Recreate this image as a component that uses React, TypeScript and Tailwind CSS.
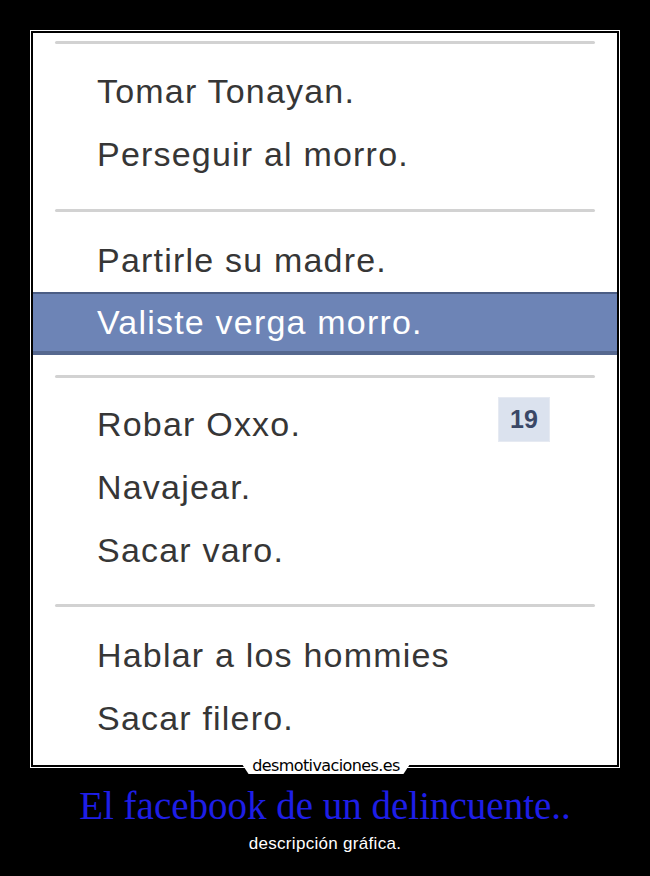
export default function App() {
  const sans = "font-['Liberation_Sans',Arial,sans-serif]"

  function separador(extra: string) {
    return <div className={"mx-[22px] h-[3px] rounded-full bg-[#d2d2d2] " + extra} />
  }

  function item(texto: string, extra = "") {
    return (
      <div className={"h-[63px] flex items-center pl-[64px] text-[34px] tracking-[1.2px] text-[#363636] " + extra}>
        {texto}
      </div>
    )
  }

  return (
    <div className={"w-[650px] h-[876px] bg-black pt-[30px] flex flex-col " + sans}>
      <div className="relative ml-[30px] w-[590px] h-[738px] border border-white p-[2px]">
        <div className="w-full h-full bg-white flex flex-col pt-[8px]">
          {separador("")}
          {item("Tomar Tonayan.", "mt-[16px]")}
          {item("Perseguir al morro.")}
          {separador("mt-[23px]")}
          {item("Partirle su madre.", "mt-[17px]")}
          <div className="h-[63px] flex items-center pl-[64px] text-[34px] tracking-[1.2px] text-white bg-[#6d84b6] border-t-2 border-t-[#4b5d84] border-b-[4px] border-b-[#56688f]">
            Valiste verga morro.
          </div>
          {separador("mt-[20px]")}
          <div className="mt-[15px] h-[63px] flex items-center justify-between pl-[64px] pr-[67px] text-[34px] tracking-[1.2px] text-[#363636]">
            <span>Robar Oxxo.</span>
            <span className="-mt-[10px] w-[52px] h-[45px] flex items-center justify-center bg-[#dbe2ee] border border-[#e6eaf2] text-[25px] font-bold tracking-normal text-[#3a4766]">
              19
            </span>
          </div>
          {item("Navajear.")}
          {item("Sacar varo.")}
          {separador("mt-[22px]")}
          {item("Hablar a los hommies", "mt-[17px]")}
          {item("Sacar filero.")}
        </div>

        <div className="absolute left-[207px] top-[727px] w-[176px] h-[16px] bg-white [clip-path:polygon(0_0,100%_0,94%_100%,6%_100%)] flex items-center justify-center">
          <span className="font-['DejaVu_Sans',sans-serif] font-medium text-[16px] leading-[16px] tracking-[-0.6px] text-black">
            desmotivaciones.es
          </span>
        </div>
      </div>

      <div className="mt-[18px] text-center leading-[40px] text-[39px] text-[#1e1ee6] font-['Liberation_Serif','Times_New_Roman',serif]">
        El facebook de un delincuente..
      </div>
      <div className="mt-[8px] text-center leading-[20px] text-[17px] tracking-[0.3px] text-white">
        descripción gráfica.
      </div>
    </div>
  )
}
